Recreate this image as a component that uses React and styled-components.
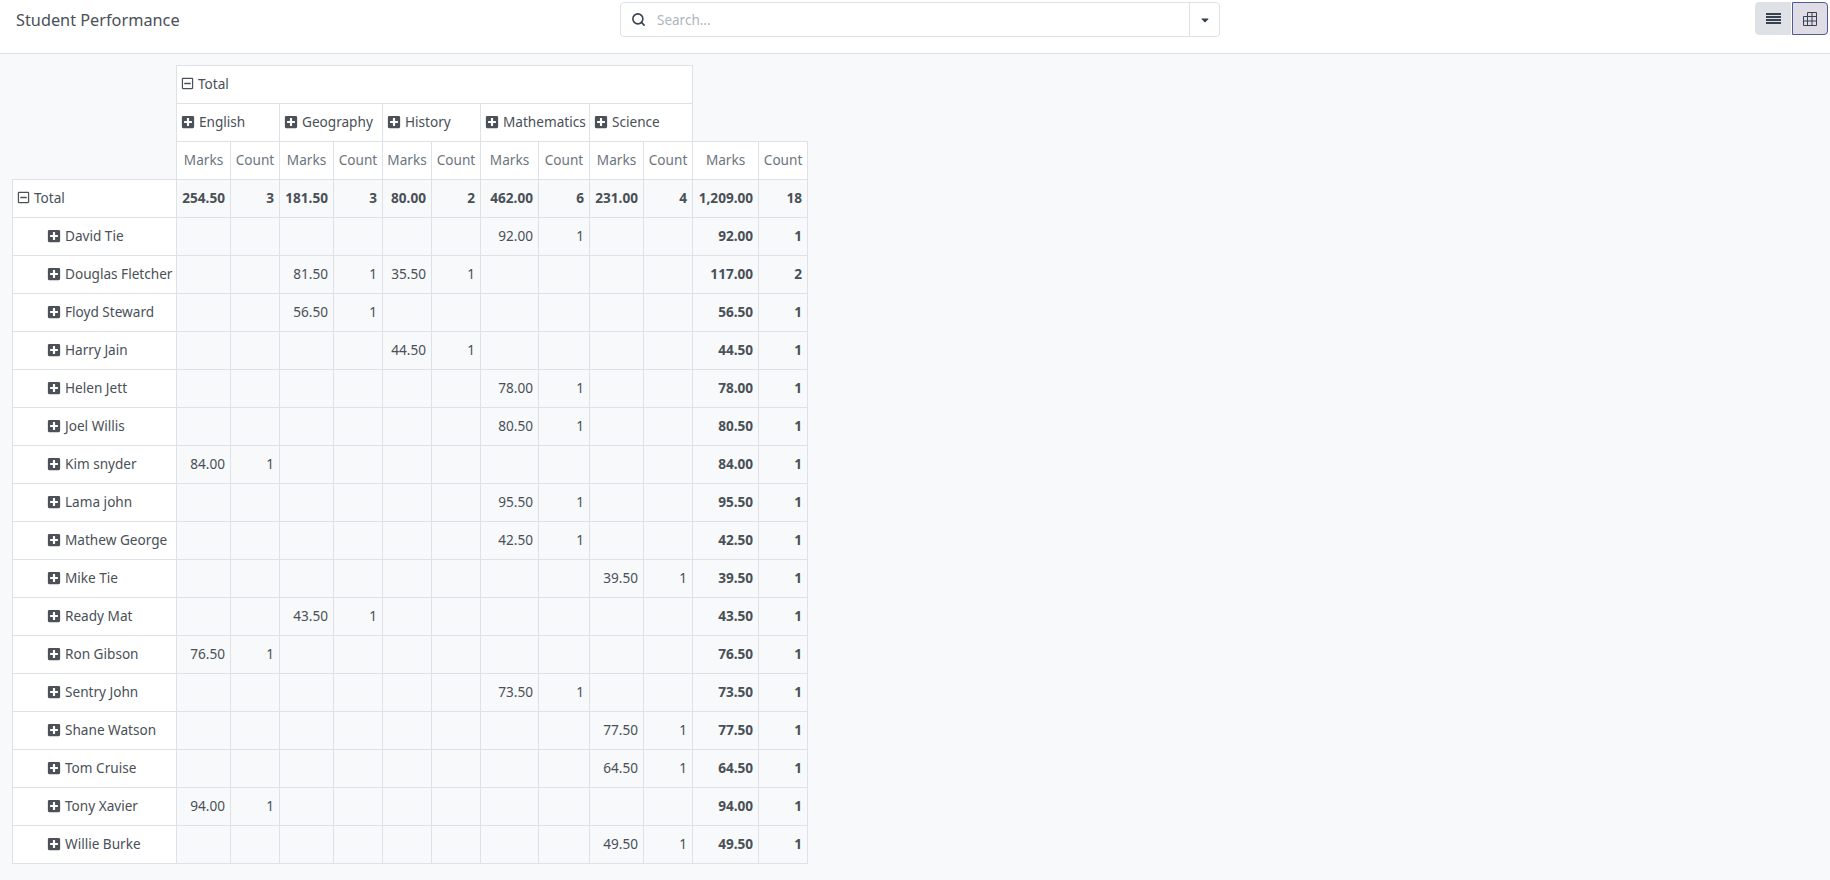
import React from 'react'
import styled, { createGlobalStyle } from 'styled-components'
import { FaCaretDown, FaPlusSquare, FaRegMinusSquare } from 'react-icons/fa'
import { Search } from 'lucide-react'

const GlobalStyle = createGlobalStyle`
  html, body { margin: 0; padding: 0; height: 100%; }
  body {
    background: #f8f9fa;
    color: #495057;
    font-family: "Noto Sans", "Open Sans", sans-serif;
    font-size: 13.6px;
  }
`

const subjects = ['English', 'Geography', 'History', 'Mathematics', 'Science']

const totals = ['254.50', '3', '181.50', '3', '80.00', '2', '462.00', '6', '231.00', '4', '1,209.00', '18']

// name, index of the subject, marks
const students = [
  ['David Tie', 3, '92.00'],
  ['Douglas Fletcher', 1, '81.50'],
  ['Floyd Steward', 1, '56.50'],
  ['Harry Jain', 2, '44.50'],
  ['Helen Jett', 3, '78.00'],
  ['Joel Willis', 3, '80.50'],
  ['Kim snyder', 0, '84.00'],
  ['Lama john', 3, '95.50'],
  ['Mathew George', 3, '42.50'],
  ['Mike Tie', 4, '39.50'],
  ['Ready Mat', 1, '43.50'],
  ['Ron Gibson', 0, '76.50'],
  ['Sentry John', 3, '73.50'],
  ['Shane Watson', 4, '77.50'],
  ['Tom Cruise', 4, '64.50'],
  ['Tony Xavier', 0, '94.00'],
  ['Willie Burke', 4, '49.50'],
]

const colWidths = [54, 49, 54, 49, 49, 49, 58, 51, 54, 49, 66, 49]

const buildCells = (row) => {
  const cells = Array(12).fill('')
  cells[row[1] * 2] = row[2]
  cells[row[1] * 2 + 1] = '1'
  if (row[0] === 'Douglas Fletcher') {
    cells[4] = '35.50'
    cells[5] = '1'
    cells[10] = '117.00'
    cells[11] = '2'
  } else {
    cells[10] = row[2]
    cells[11] = '1'
  }
  return cells
}

const ListIcon = () => (
  <svg width="15" height="11" viewBox="0 0 15 11" fill="currentColor">
    <rect x="0" y="0" width="15" height="2" />
    <rect x="0" y="3" width="15" height="2" />
    <rect x="0" y="6" width="15" height="2" />
    <rect x="0" y="9" width="15" height="2" />
  </svg>
)

const PivotIcon = () => (
  <svg width="14" height="14" viewBox="0 0 14 14" fill="none" stroke="currentColor" strokeWidth="1">
    <path d="M4.5 .5H13.5V13.5H.5V4.5H4.5ZM4.5 4.5V13.5M9 .5V13.5M4.5 4.5H13.5M.5 9H13.5" />
  </svg>
)

const App = () => {
  return (
    <>
      <GlobalStyle />
      <TopBar>
        <Title>Student Performance</Title>
        <SearchBox>
          <SearchIcon><Search size={15} strokeWidth={2.5} /></SearchIcon>
          <SearchInput placeholder="Search..." />
          <SearchToggle><FaCaretDown /></SearchToggle>
        </SearchBox>
        <Switcher>
          <SwitchButton><ListIcon /></SwitchButton>
          <SwitchButton $active><PivotIcon /></SwitchButton>
        </Switcher>
      </TopBar>
      <Content>
        <PivotTable>
          <colgroup>
            <col style={{ width: 164 }} />
            {colWidths.map((w, i) => <col key={i} style={{ width: w }} />)}
          </colgroup>
          <thead>
            <tr>
              <Blank rowSpan={3} />
              <HeadCell colSpan={10}><Toggle><FaRegMinusSquare />Total</Toggle></HeadCell>
              <Blank colSpan={2} rowSpan={2} />
            </tr>
            <tr>
              {subjects.map(s => (
                <HeadCell key={s} colSpan={2}><Toggle $closed><FaPlusSquare />{s}</Toggle></HeadCell>
              ))}
            </tr>
            <tr>
              {colWidths.map((w, i) => (
                <MeasureCell key={i}>{i % 2 === 0 ? 'Marks' : 'Count'}</MeasureCell>
              ))}
            </tr>
          </thead>
          <tbody>
            <tr>
              <RowHead><Toggle><FaRegMinusSquare />Total</Toggle></RowHead>
              {totals.map((v, i) => <ValueCell key={i} $bold>{v}</ValueCell>)}
            </tr>
            {students.map(row => (
              <tr key={row[0]}>
                <RowHead $nested><Toggle $closed><FaPlusSquare />{row[0]}</Toggle></RowHead>
                {buildCells(row).map((v, i) => (
                  <ValueCell key={i} $bold={i >= 10}>{v}</ValueCell>
                ))}
              </tr>
            ))}
          </tbody>
        </PivotTable>
      </Content>
    </>
  )
}

export default App

const TopBar = styled.header`
  display: grid;
  grid-template-columns: 604px 600px 1fr;
  align-items: start;
  height: 51px;
  padding: 2px 2px 0 16px;
  background: #fff;
  border-bottom: 1px solid #dee2e6;
`

const Title = styled.h1`
  margin: 0;
  padding-top: 6px;
  font-size: 16.3px;
  font-weight: 400;
  line-height: 24px;
  color: #495057;
`

const SearchBox = styled.div`
  display: flex;
  align-items: center;
  height: 35px;
  box-sizing: border-box;
  background: #fff;
  border: 1px solid #dee2e6;
  border-radius: 4px;
`

const SearchIcon = styled.span`
  display: flex;
  padding: 0 9px 0 10px;
  color: #374151;
`

const SearchInput = styled.input`
  flex: 1;
  border: 0;
  outline: 0;
  padding: 0 0 0 2px;
  background: transparent;
  font: inherit;
  font-size: 13.5px;
  &::placeholder { color: #adb5bd; }
`

const SearchToggle = styled.span`
  display: flex;
  align-items: center;
  justify-content: center;
  width: 29px;
  height: 100%;
  border-left: 1px solid #dee2e6;
  font-size: 12px;
  color: #374151;
`

const Switcher = styled.div`
  display: flex;
  justify-content: flex-end;
  gap: 1px;
`

const SwitchButton = styled.button`
  display: flex;
  align-items: center;
  justify-content: center;
  width: 36px;
  height: 33px;
  padding: 0;
  color: #374151;
  background: ${p => p.$active ? '#e0dce6' : '#dee2e6'};
  border: 1px solid ${p => p.$active ? '#4f5b93' : '#dee2e6'};
  border-radius: ${p => p.$active ? '0 4px 4px 0' : '4px 0 0 4px'};
`

const Content = styled.main`
  padding: 11px 0 0 12px;
`

const PivotTable = styled.table`
  border-collapse: collapse;
  table-layout: fixed;
  width: 795px;
`

const Blank = styled.th`
  padding: 0;
  border: 0;
`

const Cell = styled.td`
  height: 38px;
  box-sizing: border-box;
  padding: 0 5px;
  border: 1px solid #dee2e6;
  white-space: nowrap;
`

const HeadCell = styled(Cell).attrs({ as: 'th' })`
  background: #fff;
  font-weight: 400;
  text-align: left;
  padding-left: 4px;
`

const MeasureCell = styled(Cell).attrs({ as: 'th' })`
  background: #fff;
  font-weight: 400;
  text-align: center;
  color: #6c757d;
  padding: 0 2px 2px;
`

const RowHead = styled(Cell).attrs({ as: 'th' })`
  background: #fff;
  font-weight: 400;
  text-align: left;
  padding-left: ${p => p.$nested ? '34px' : '4px'};
`

const ValueCell = styled(Cell)`
  text-align: right;
  padding-bottom: 2px;
  font-weight: ${p => p.$bold ? 700 : 400};
`

const Toggle = styled.span`
  display: inline-flex;
  align-items: center;
  gap: 4px;
  margin-bottom: ${p => p.$closed ? '0' : '2px'};
  svg { font-size: ${p => p.$closed ? '14px' : '13px'}; color: #4c5058; }
`
